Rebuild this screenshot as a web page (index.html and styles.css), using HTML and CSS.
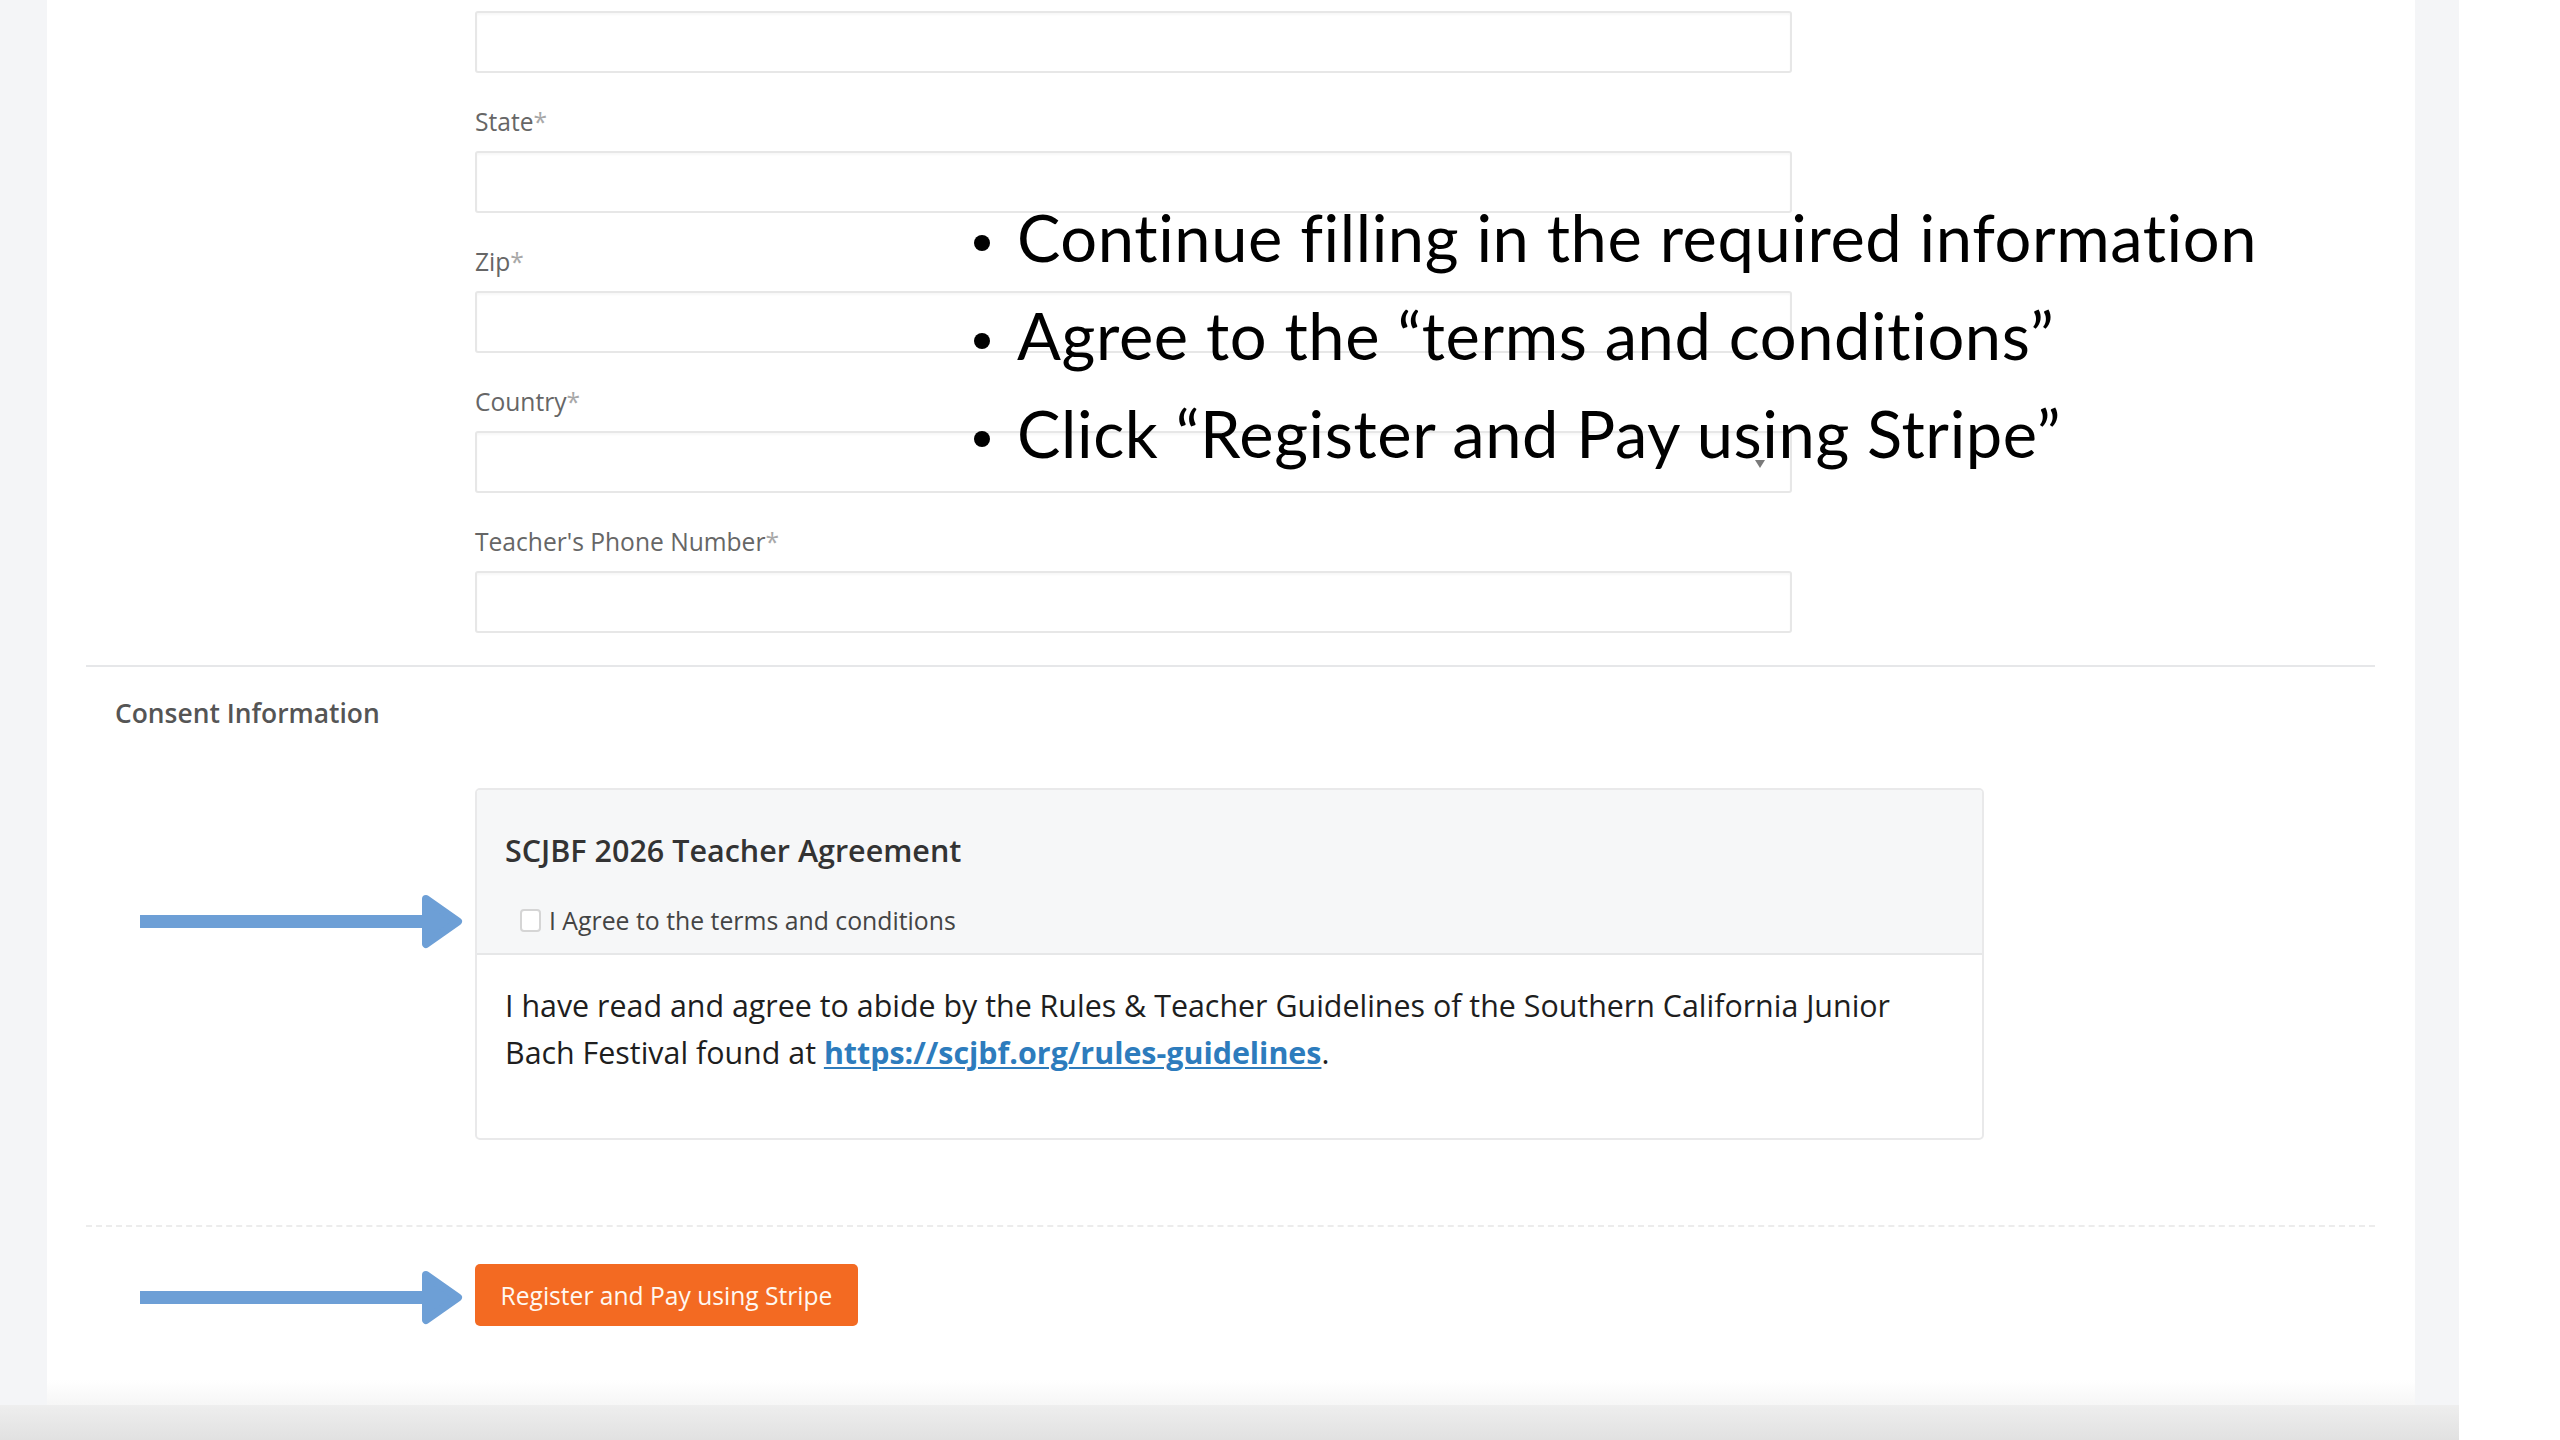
FILE: index.html
```html
<!DOCTYPE html>
<html lang="en">
<head>
<meta charset="utf-8">
<title>Teacher Registration</title>
<link rel="stylesheet" href="styles.css">
</head>
<body>
<div class="screen">
  <div class="viewport">
    <div class="panel-row">
      <main class="panel">
        <form class="form">
          <div class="fields">
            <div class="field first">
              <div class="input"></div>
            </div>
            <div class="field">
              <label class="label">State<span class="req">*</span></label>
              <div class="input"></div>
            </div>
            <div class="field">
              <label class="label">Zip<span class="req">*</span></label>
              <div class="input"></div>
            </div>
            <div class="field">
              <label class="label">Country<span class="req">*</span></label>
              <div class="input select"><span class="caret"></span></div>
            </div>
            <div class="field last">
              <label class="label">Teacher's Phone Number<span class="req">*</span></label>
              <div class="input"></div>
            </div>
          </div>

          <hr class="divider">

          <h3 class="section-title">Consent Information</h3>

          <div class="card">
            <div class="card-header">
              <h4 class="card-title">SCJBF 2026 Teacher Agreement</h4>
              <div class="check-row">
                <span class="checkbox"></span>
                <span class="check-label">I Agree to the terms and conditions</span>
              </div>
            </div>
            <div class="card-body">
              <p>I have read and agree to abide by the Rules &amp; Teacher Guidelines of the Southern California Junior Bach Festival found at <a class="link" href="#">https://scjbf.org/rules-guidelines</a>.</p>
            </div>
          </div>

          <hr class="dotted">

          <div class="actions">
            <button type="button" class="btn">Register and Pay using Stripe</button>
          </div>
        </form>

        <svg class="arrow arrow-1" width="324" height="57" viewBox="0 0 324 57">
          <rect x="0" y="22" width="292" height="13" fill="#6d9fd6"/>
          <polygon points="286,6 318,28.5 286,51" fill="#6d9fd6" stroke="#6d9fd6" stroke-width="8" stroke-linejoin="round"/>
        </svg>
        <svg class="arrow arrow-2" width="324" height="57" viewBox="0 0 324 57">
          <rect x="0" y="22" width="292" height="13" fill="#6d9fd6"/>
          <polygon points="286,6 318,28.5 286,51" fill="#6d9fd6" stroke="#6d9fd6" stroke-width="8" stroke-linejoin="round"/>
        </svg>

        <ul class="notes">
          <li><span class="dot"></span>Continue filling in the required information</li>
          <li><span class="dot"></span>Agree to the “terms and conditions”</li>
          <li><span class="dot"></span>Click “Register and Pay using Stripe”</li>
        </ul>
      </main>
    </div>
    <div class="bottom-band"></div>
  </div>
</div>
</body>
</html>
```

FILE: styles.css
```css
* { box-sizing: border-box; }

html, body {
  margin: 0;
  padding: 0;
}

body {
  width: 2560px;
  height: 1440px;
  overflow: hidden;
  background: #ffffff;
  font-family: "Open Sans", "Noto Sans", sans-serif;
  color: #333;
}

.screen {
  display: flex;
  width: 2560px;
  height: 1440px;
}

.viewport {
  width: 2459px;
  height: 1440px;
  background: #f4f5f7;
  display: flex;
  flex-direction: column;
}

.panel-row {
  height: 1405px;
  padding-left: 47px;
  display: flex;
}

.panel {
  position: relative;
  width: 2368px;
  height: 1405px;
  background: linear-gradient(#ffffff 0, #ffffff 1380px, #f6f6f6 1405px);
}

.bottom-band {
  height: 35px;
  background: linear-gradient(#eeeeee, #e1e1e1);
}

.form {
  padding: 0 40px 0 39px;
}

.fields {
  margin-left: 389px;
  width: 1317px;
}

.field {
  display: flex;
  flex-direction: column;
  margin-bottom: 32px;
}

.field.first {
  padding-top: 11px;
}

.field.last {
  margin-bottom: 0;
}

.label {
  display: block;
  font-size: 24.6px;
  line-height: 34px;
  color: #666;
  margin-bottom: 12px;
}

.req {
  color: #a8a8a8;
}

.input {
  position: relative;
  height: 62px;
  background: #fff;
  border: 2px solid #e7e7e7;
  border-radius: 3px;
  box-shadow: inset 0 2px 2px rgba(0, 0, 0, 0.03);
}

.caret {
  position: absolute;
  right: 25px;
  top: 27px;
  width: 0;
  height: 0;
  border-left: 5px solid transparent;
  border-right: 5px solid transparent;
  border-top: 8px solid #7a7a7a;
}

.divider {
  margin: 32px 0 0 0;
  border: 0;
  border-top: 2px solid #e6e7e9;
  height: 0;
}

.section-title {
  margin: 28px 0 0 29px;
  font-size: 26.4px;
  line-height: 36px;
  font-weight: 600;
  color: #555;
}

.card {
  margin: 57px 0 0 389px;
  width: 1509px;
  border: 2px solid #e9e9ea;
  border-radius: 5px;
  background: #fff;
  overflow: hidden;
}

.card-header {
  background: #f6f7f8;
  border-bottom: 2px solid #e6e7e8;
  padding: 39px 28px 15px 28px;
}

.card-title {
  margin: 0;
  font-size: 30.5px;
  line-height: 42px;
  font-weight: 600;
  color: #333;
}

.check-row {
  display: flex;
  align-items: center;
  margin-top: 32px;
  padding-left: 15px;
  height: 35px;
}

.checkbox {
  width: 21px;
  height: 23px;
  border: 2px solid #d5d5d5;
  border-radius: 4px;
  background: #fff;
  margin-right: 8px;
}

.check-label {
  font-size: 24.8px;
  line-height: 35px;
  color: #444;
}

.card-body {
  padding: 27px 70px 62px 28px;
}

.card-body p {
  margin: 0;
  font-size: 30.4px;
  line-height: 47px;
  color: #1e1e1e;
}

.link {
  color: #2d7cbd;
  font-weight: 700;
  text-decoration: underline;
  text-decoration-thickness: 2px;
  text-underline-offset: 3px;
}

.dotted {
  margin: 85px 0 0 0;
  border: 0;
  border-top: 2px dashed #ececec;
  height: 0;
}

.actions {
  margin: 37px 0 0 389px;
}

.btn {
  display: flex;
  align-items: center;
  justify-content: center;
  width: 383px;
  height: 62px;
  border: 0;
  border-radius: 5px;
  background: #f36a22;
  color: #fff8f0;
  font-family: "Open Sans", "Noto Sans", sans-serif;
  font-size: 24.6px;
  padding: 0;
}

.arrow {
  position: absolute;
  left: 93px;
}

.arrow-1 {
  top: 893px;
}

.arrow-2 {
  top: 1269px;
}

.notes {
  position: absolute;
  left: 927px;
  top: 188px;
  margin: 0;
  padding: 0;
  list-style: none;
  font-family: "Lato", "Noto Sans", sans-serif;
  font-size: 65px;
  line-height: 98px;
  color: #000;
  letter-spacing: 0.6px;
  white-space: nowrap;
}

.notes li {
  display: flex;
  align-items: center;
}

.dot {
  display: inline-block;
  width: 16px;
  height: 16px;
  border-radius: 50%;
  background: #000;
  margin-right: 27px;
  position: relative;
  top: 6px;
}
```
